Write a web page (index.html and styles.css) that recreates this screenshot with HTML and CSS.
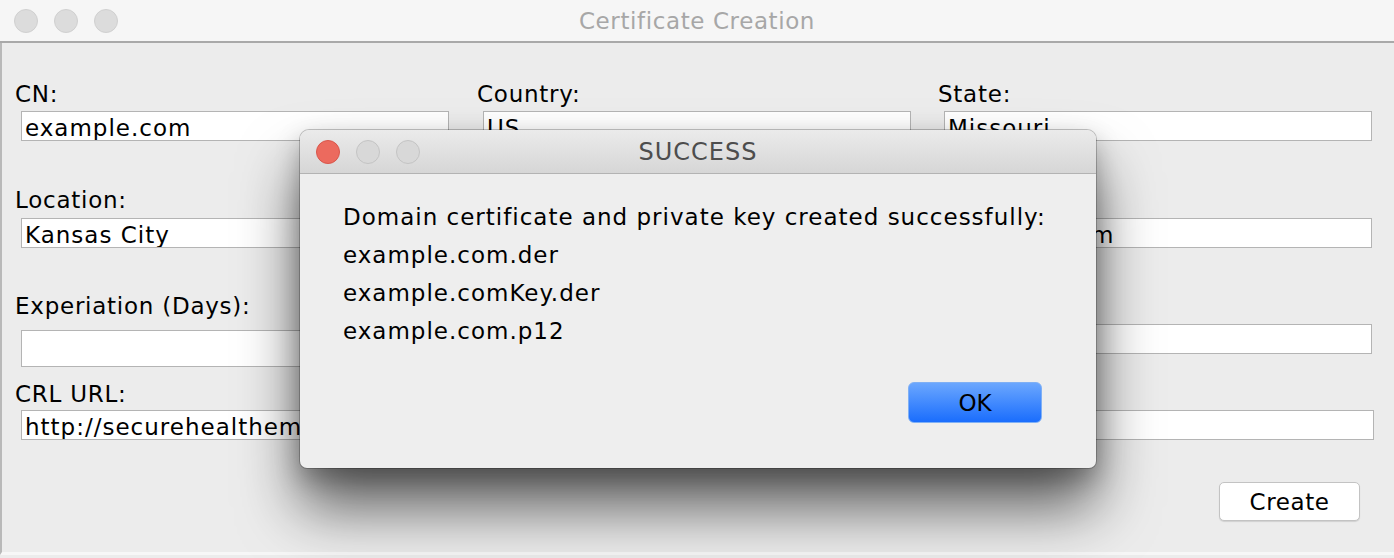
FILE: index.html
```html
<!DOCTYPE html>
<html>
<head>
<meta charset="utf-8">
<link rel="stylesheet" href="styles.css">
<title>Certificate Creation</title>
</head>
<body>
<div class="window">
  <div class="titlebar">
    <div class="lights">
      <span class="light"></span><span class="light"></span><span class="light"></span>
    </div>
    <div class="title">Certificate Creation</div>
  </div>
  <div class="content">
    <div class="form">
      <div class="row row1">
        <div class="cell"><div class="label">CN:</div><div class="field">example.com</div></div>
        <div class="cell"><div class="label">Country:</div><div class="field">US</div></div>
        <div class="cell"><div class="label">State:</div><div class="field">Missouri</div></div>
      </div>
      <div class="row row2">
        <div class="cell"><div class="label">Location:</div><div class="field">Kansas City</div></div>
        <div class="cell"><div class="label"></div><div class="field"></div></div>
        <div class="cell"><div class="label"></div><div class="field">example.com</div></div>
      </div>
      <div class="row row3">
        <div class="cell"><div class="label">Experiation (Days):</div><div class="field tall"></div></div>
        <div class="cell"><div class="label"></div><div class="field"></div></div>
        <div class="cell"><div class="label"></div><div class="field"></div></div>
      </div>
      <div class="row row4">
        <div class="cell"><div class="label">CRL URL:</div><div class="field">http://securehealthem</div></div>
        <div class="cell"><div class="label"></div><div class="field"></div></div>
        <div class="cell"><div class="label"></div><div class="field wide"></div></div>
      </div>
    </div>
    <div class="actions">
      <button class="btn">Create</button>
    </div>
  </div>

  <div class="dialog">
    <div class="dlg-titlebar">
      <div class="lights">
        <span class="light red"></span><span class="light"></span><span class="light"></span>
      </div>
      <div class="dlg-title">SUCCESS</div>
    </div>
    <div class="dlg-body">
      <div class="msg">
        <div>Domain certificate and private key created successfully:</div>
        <div>example.com.der</div>
        <div>example.comKey.der</div>
        <div>example.com.p12</div>
      </div>
      <div class="dlg-actions">
        <button class="btn-ok">OK</button>
      </div>
    </div>
  </div>
</div>
</body>
</html>
```

FILE: styles.css
```css
* { box-sizing: border-box; }
html, body {
  margin: 0;
  padding: 0;
  background: #ececec;
}
body {
  font-family: "DejaVu Sans", "Liberation Sans", sans-serif;
  color: #000;
}
.window {
  position: relative;
  width: 1394px;
  height: 558px;
  overflow: hidden;
  background: #ececec;
}
.titlebar {
  position: relative;
  height: 43px;
  background: #f6f6f6;
  border-bottom: 2px solid #a9a9a9;
  display: flex;
  align-items: center;
}
.lights {
  display: flex;
  gap: 16px;
  padding-left: 14px;
}
.light {
  width: 24px;
  height: 24px;
  border-radius: 50%;
  background: #dcdcdc;
  border: 1px solid #d0d0d0;
}
.title {
  position: absolute;
  left: 0;
  right: 0;
  top: 8px;
  text-align: center;
  font-size: 23px;
  letter-spacing: 0.6px;
  line-height: 26px;
  color: #a7a7a7;
}
.content {
  height: 512px;
  border-left: 2px solid #b9b9b9;
  border-bottom: 3px solid #f7f7f7;
  padding-left: 13px;
  padding-top: 38px;
  background: #ececec;
}
.row {
  display: grid;
  grid-template-columns: 462px 461px 440px;
  align-items: start;
}
.row2 { margin-top: 46px; }
.row3 { margin-top: 45px; }
.row4 { margin-top: 14px; }
.label {
  font-size: 23px;
  letter-spacing: 0.75px;
  line-height: 26px;
  height: 26px;
  white-space: nowrap;
}
.field {
  margin-left: 6px;
  margin-top: 4px;
  width: 428px;
  height: 30px;
  background: #fff;
  border: 1px solid #b4b4b4;
  padding: 3px 0 0 3px;
  font-size: 23px;
  letter-spacing: 1px;
  line-height: 26px;
  white-space: nowrap;
  overflow: hidden;
}
.row2 .field { margin-top: 5px; }
.row3 .field { margin-top: 5px; }
.row3 .field.tall { margin-top: 11px; height: 37px; }
.row4 .field { margin-top: 3px; }
.field.wide { width: 430px; }
.actions {
  display: flex;
  justify-content: flex-end;
  padding-right: 34px;
  margin-top: 42px;
}
.btn {
  width: 141px;
  height: 39px;
  background: #fff;
  border: 1px solid #c3c3c3;
  border-radius: 5px;
  box-shadow: 0 1px 1px rgba(0,0,0,0.12);
  font-family: "DejaVu Sans", "Liberation Sans", sans-serif;
  font-size: 23px;
  letter-spacing: 0.6px;
  color: #000;
  padding: 0;
}

/* dialog */
.dialog {
  position: absolute;
  left: 300px;
  top: 130px;
  width: 796px;
  height: 338px;
  background: #eeeeee;
  border-radius: 9px 9px 7px 7px;
  box-shadow: 0 0 0 1px rgba(0,0,0,0.22), 0 40px 60px rgba(0,0,0,0.6), 0 10px 24px rgba(0,0,0,0.25);
  overflow: hidden;
}
.dlg-titlebar {
  position: relative;
  height: 44px;
  background: linear-gradient(#ebebeb, #d6d6d6);
  border-bottom: 1px solid #b3b3b3;
  display: flex;
  align-items: center;
}
.dlg-titlebar .lights { padding-left: 16px; }
.light.red {
  background: #ec6a5e;
  border-color: #d9564b;
}
.dlg-titlebar .light:not(.red) {
  background: #d8d8d8;
  border-color: #c4c4c4;
}
.dlg-title {
  position: absolute;
  left: 0;
  right: 0;
  top: 9px;
  text-align: center;
  font-size: 24px;
  letter-spacing: 1px;
  line-height: 26px;
  color: #4d4d4d;
}
.dlg-body {
  padding: 24px 54px 0 43px;
}
.msg {
  font-size: 23px;
  letter-spacing: 1px;
  line-height: 38px;
  white-space: nowrap;
  margin-right: -54px;
}
.dlg-actions {
  display: flex;
  justify-content: flex-end;
  margin-top: 32px;
}
.btn-ok {
  width: 134px;
  height: 41px;
  border-radius: 6px;
  border: 1px solid #7fb0f5;
  background: linear-gradient(#6ba7fe, #1a6dfd);
  font-family: "DejaVu Sans", "Liberation Sans", sans-serif;
  font-size: 23px;
  color: #000;
  padding: 0;
}
```
